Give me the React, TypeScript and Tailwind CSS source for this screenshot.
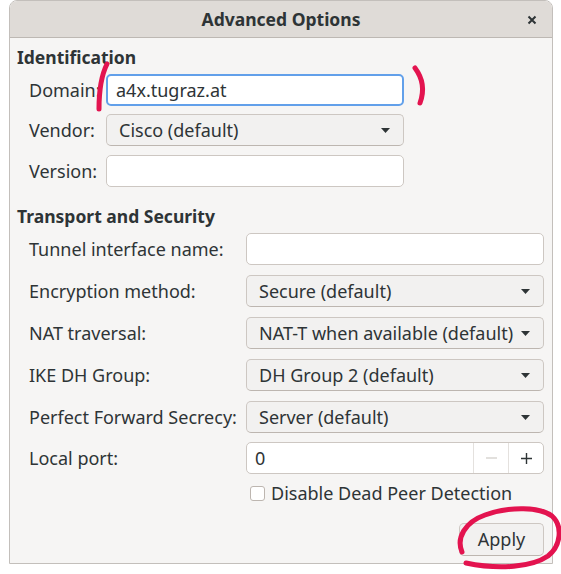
import React from 'react';

const font = { fontFamily: '"Noto Sans", "DejaVu Sans", sans-serif' };

const Arrow = () => (
  <svg width="9" height="5" viewBox="0 0 9 5" className="shrink-0">
    <path d="M0 0 H9 L4.5 5 Z" fill="#2e3436" />
  </svg>
);

const Entry = ({ value = '', focus = false, w = 'w-[298px]' }: { value?: string; focus?: boolean; w?: string }) => (
  <div
    className={`${w} h-[32px] rounded-[5px] bg-white flex items-center px-[8px] text-[#2e3436] ${
      focus ? 'border-2 border-[#62a0ea] px-[7px]' : 'border border-[#cdc7c2]'
    }`}
  >
    {value}
  </div>
);

const Combo = ({ value }: { value: string }) => (
  <div className="w-[298px] h-[32px] rounded-[5px] bg-[#f2f1f0] border border-[#cdc7c2] border-b-[#bdb6b0] flex items-center justify-between pl-[12px] pr-[13px] text-[#2e3436]">
    <span className="whitespace-nowrap">{value}</span>
    <Arrow />
  </div>
);

const Row = ({ label, col, children }: { label: string; col: string; children: React.ReactNode }) => (
  <div className="flex items-center pl-[12px]">
    <span className={`${col} shrink-0 whitespace-nowrap`}>{label}</span>
    {children}
  </div>
);

export default function App() {
  return (
    <div className="relative w-[561px] h-[574px] bg-white text-[18px] text-[#2e3436]" style={font}>
      <div className="ml-[9px] w-[544px] h-[564px] flex flex-col border border-[#c3bfbb] rounded-t-[8px] overflow-hidden">
        <div className="h-[37px] shrink-0 relative flex items-center justify-center bg-[#dfdbd7] border-b border-[#bdb8b3]">
          <span className="font-bold text-[17.5px] text-[#2e3436]">Advanced Options</span>
          <svg width="10" height="10" viewBox="0 0 10 10" className="absolute right-[15px] top-[14px]">
            <path d="M1.5 1.5 L8.5 8.5 M8.5 1.5 L1.5 8.5" stroke="#2e3436" strokeWidth="2" />
          </svg>
        </div>

        <div className="flex-1 bg-[#f6f5f4] flex flex-col pl-[7px] pr-[8px] pt-[9px]">
          <div className="h-[20px] leading-[20px] font-bold text-[17.5px]">Identification</div>

          <div className="mt-[7px] flex flex-col gap-[8px]">
            <Row label="Domain:" col="w-[77px]">
              <Entry value="a4x.tugraz.at" focus />
            </Row>
            <Row label="Vendor:" col="w-[77px]">
              <Combo value="Cisco (default)" />
            </Row>
            <div className="mt-[1px]">
              <Row label="Version:" col="w-[77px]">
                <Entry />
              </Row>
            </div>
          </div>

          <div className="mt-[19px] h-[20px] leading-[20px] font-bold text-[17.5px]">Transport and Security</div>

          <div className="mt-[7px] flex flex-col gap-[10px]">
            <Row label="Tunnel interface name:" col="w-[217px]">
              <Entry />
            </Row>
            <Row label="Encryption method:" col="w-[217px]">
              <Combo value="Secure (default)" />
            </Row>
            <Row label="NAT traversal:" col="w-[217px]">
              <Combo value="NAT-T when available (default)" />
            </Row>
            <Row label="IKE DH Group:" col="w-[217px]">
              <Combo value="DH Group 2 (default)" />
            </Row>
            <Row label="Perfect Forward Secrecy:" col="w-[217px]">
              <Combo value="Server (default)" />
            </Row>
            <div className="-mt-[1px]">
              <Row label="Local port:" col="w-[217px]">
                <div className="w-[298px] h-[32px] rounded-[5px] bg-white border border-[#cdc7c2] flex items-center">
                  <span className="flex-1 pl-[8px]">0</span>
                  <div className="w-[35px] h-full border-l border-[#e4e1de] flex items-center justify-center">
                    <svg width="11" height="2" viewBox="0 0 11 2"><path d="M0 1 H11" stroke="#cfcbc7" strokeWidth="1.2" /></svg>
                  </div>
                  <div className="w-[35px] h-full border-l border-[#e4e1de] flex items-center justify-center">
                    <svg width="11" height="11" viewBox="0 0 11 11"><path d="M0 5.5 H11 M5.5 0 V11" stroke="#2e3436" strokeWidth="1.4" /></svg>
                  </div>
                </div>
              </Row>
            </div>
          </div>

          <div className="mt-[9px] ml-[233px] h-[20px] flex items-center gap-[6px]">
            <div className="w-[15px] h-[15px] rounded-[3px] border border-[#bdb6b0] bg-white" />
            <span className="whitespace-nowrap">Disable Dead Peer Detection</span>
          </div>

          <div className="mt-[20px] flex justify-end">
            <div className="w-[85px] h-[33px] rounded-[5px] bg-[#f2f1f0] border border-[#cdc7c2] border-b-[#bdb6b0] flex items-center justify-center">
              Apply
            </div>
          </div>
        </div>
      </div>

      {/* hand-drawn red marks over the dialog */}
      <svg className="absolute inset-0 pointer-events-none" width="561" height="574" viewBox="0 0 561 574">
        <g fill="none" stroke="#e3134f" strokeLinecap="round" strokeWidth="5">
          <path d="M107 64 Q99 80 99 109" />
          <path d="M415 68 Q427 84 420 103" />
          <path d="M462 552 C456 538 465 522 485 515 C510 506 540 507 552 516 C563 526 561 546 548 556 C532 567 500 570 466 563" />
        </g>
      </svg>
    </div>
  );
}
